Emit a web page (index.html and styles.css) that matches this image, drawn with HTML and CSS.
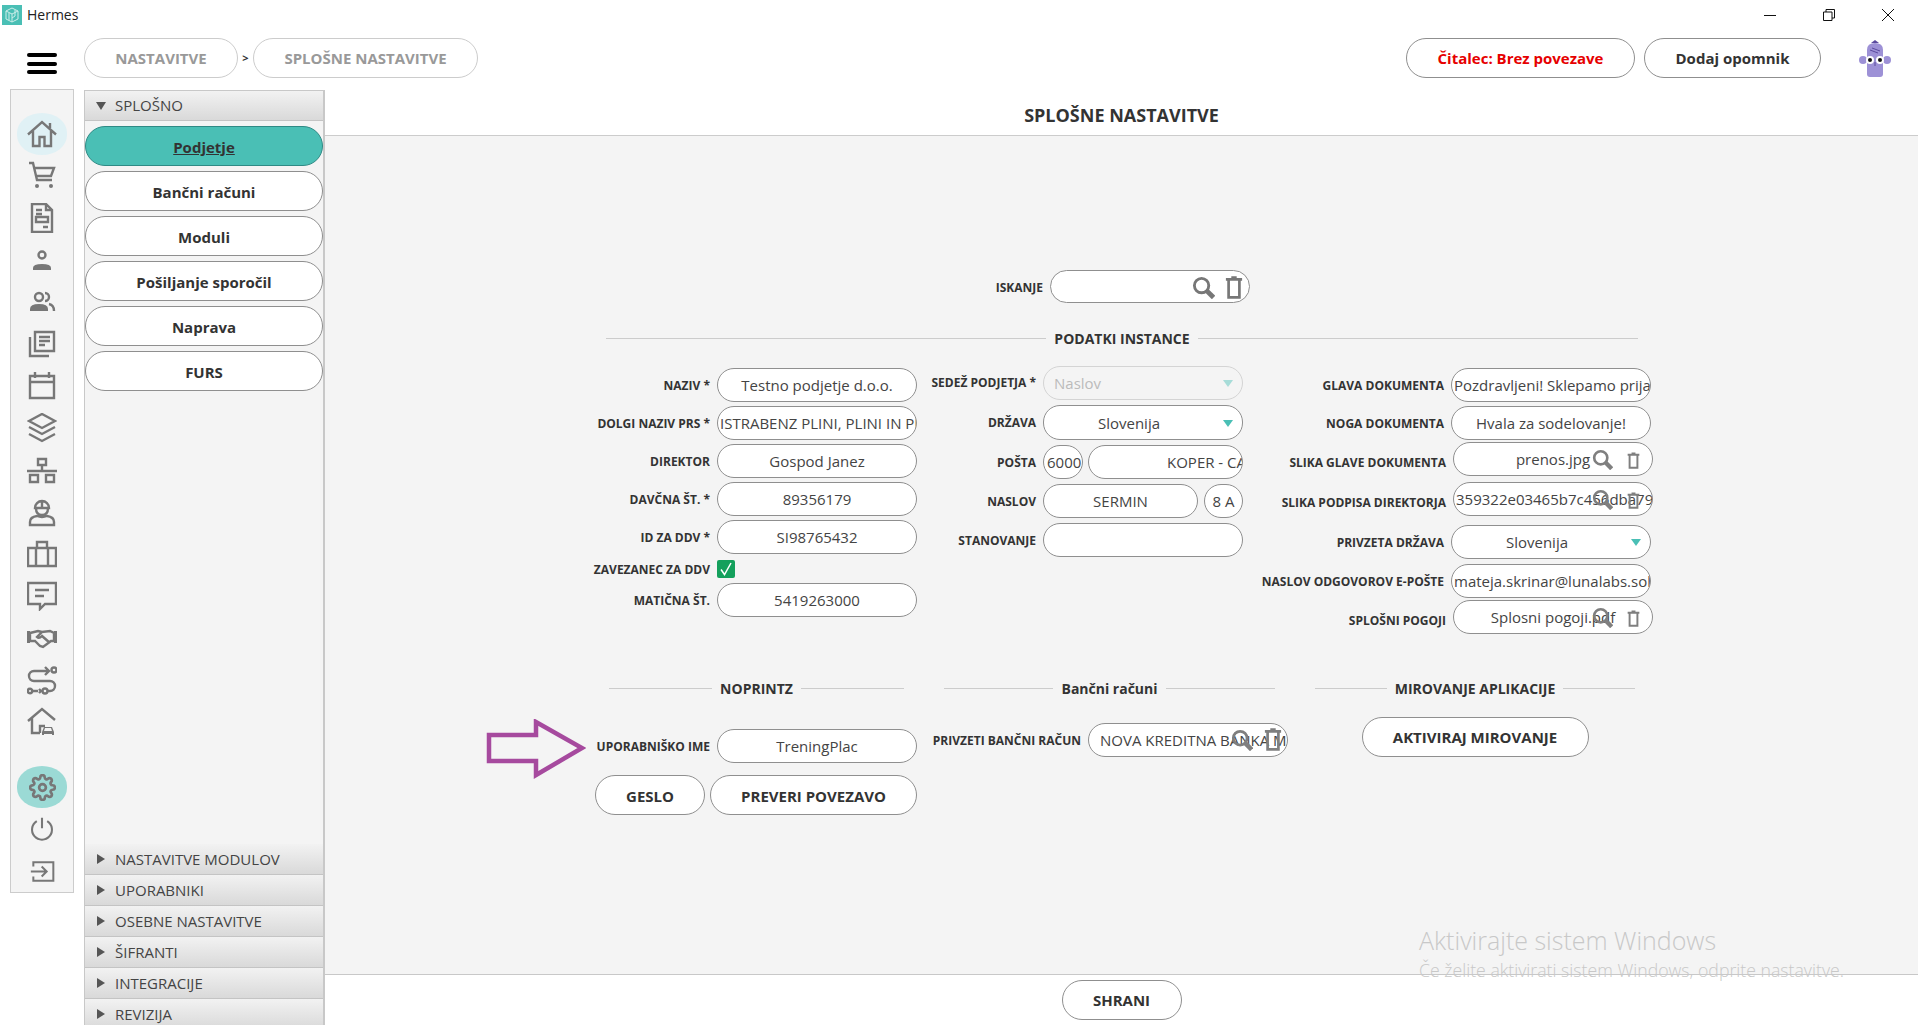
FILE: index.html
```html
<!DOCTYPE html>
<html lang="sl">
<head>
<meta charset="utf-8">
<title>Hermes</title>
<link rel="stylesheet" href="styles.css">
</head>
<body>
<div class="app">
  <header class="titlebar">
    <svg class="app-logo" viewBox="0 0 20 20" width="20" height="20"><rect width="20" height="20" fill="#4abfb5"/><path d="M10 3l6 3v8l-6 3-6-3V6zM4 6l6 3 6-3M10 9v8M7 8v7M13 5v6l-3 2" fill="none" stroke="#cdeeea" stroke-width="1"/></svg>
    <span class="app-name">Hermes</span>
    <div class="win-controls">
      <svg viewBox="0 0 12 12" width="12" height="12"><path d="M0 6.500h12" stroke="#111" fill="none"/></svg>
      <svg viewBox="0 0 12 12" width="12" height="12"><path d="M.5 3h8.500v8.500H.5zM3 3V.5h8.500V9H9" stroke="#111" fill="none"/></svg>
      <svg viewBox="0 0 12 12" width="12" height="12"><path d="M0 0l12 12M12 0L0 12" stroke="#111" fill="none"/></svg>
    </div>
  </header>

  <div class="toolbar">
    <div class="hamburger"><i></i><i></i><i></i></div>
    <div class="crumb crumb-a">NASTAVITVE</div>
    <span class="crumb-sep">&gt;</span>
    <div class="crumb crumb-b">SPLOŠNE NASTAVITVE</div>
    <div class="toolbar-right">
      <div class="btn reader">Čitalec: Brez povezave</div>
      <div class="btn reminder">Dodaj opomnik</div>
      <svg class="mascot" viewBox="0 0 32 38" width="32" height="38">
        <path d="M12 3l4-3 4 3z" fill="#5b4a9e"/>
        <path d="M8 10q0-7 8-7t8 7v24q0 3-3 3H11q-3 0-3-3z" fill="#9d91d6"/>
        <circle cx="4" cy="20" r="4" fill="#9d91d6"/><circle cx="28" cy="20" r="4" fill="#9d91d6"/>
        <circle cx="11" cy="20" r="4" fill="#fff"/><circle cx="21" cy="20" r="4" fill="#fff"/>
        <circle cx="11" cy="20" r="2" fill="#111"/><circle cx="21" cy="20" r="2" fill="#111"/>
        <path d="M16 22v4M11 10l8 3M13 8l8 3" stroke="#5b4a9e" fill="none"/>
      </svg>
    </div>
  </div>

  <div class="workspace">
    <nav class="rail">
      <div class="rail-group">
        <div class="rail-item home-item"><svg class="ic" viewBox="0 0 30 30" width="30" height="30"><path d="M1 15.500L15 3l14 12.500M6 12v15h6.500v-9h5v9H24V12M23 9V4"/></svg></div>
        <div class="rail-item"><svg class="ic" viewBox="0 0 30 30" width="30" height="30"><path d="M2 2h4l4 17h15M7 7h20l-3 8H9"/><circle cx="10" cy="25" r="2" class="solid"/><circle cx="24" cy="25" r="2" class="solid"/></svg></div>
        <div class="rail-item"><svg class="ic" viewBox="0 0 30 30" width="30" height="30"><path d="M5 1h14l6 6v22H5zM19 1v6h6M9 7h6M9 11h6M9 14h12v5H9zM16 24h5"/></svg></div>
        <div class="rail-item"><svg class="ic" viewBox="0 0 30 30" width="30" height="30"><circle cx="15" cy="10" r="3.500"/><path class="solid" d="M6 25v-2q0-4 9-4t9 4v2z"/></svg></div>
        <div class="rail-item"><svg class="ic" viewBox="0 0 30 30" width="30" height="30"><circle cx="12" cy="10" r="4"/><path d="M18 6a4 4 0 0 1 0 8"/><path class="solid" d="M3 24v-2q0-5 9-5t9 5v2z"/><path d="M22 17q5 1 5 7"/></svg></div>
        <div class="rail-item"><svg class="ic" viewBox="0 0 30 30" width="30" height="30"><path d="M8 3h19v19H8zM3 8v19h19M12 8h11M12 12h11M12 16h6"/></svg></div>
        <div class="rail-item"><svg class="ic" viewBox="0 0 30 30" width="30" height="30"><path d="M3 5h24v22H3zM3 11h24M8 1v6M22 1v6"/></svg></div>
        <div class="rail-item"><svg class="ic" viewBox="0 0 30 30" width="30" height="30"><path d="M15 1l13 7-13 7L2 8zM2 14l13 7 13-7M2 21l13 7 13-7"/></svg></div>
        <div class="rail-item"><svg class="ic" viewBox="0 0 30 30" width="30" height="30"><path d="M11 4h8v6h-8zM15 10v5M0 16h30M3 20h8v7H3zM19 20h8v7h-8z"/></svg></div>
        <div class="rail-item"><svg class="ic" viewBox="0 0 30 30" width="30" height="30"><path d="M8 11a7 7 0 0 1 14 0zM15 4v7M9 11q0 7 6 7t6-7M3 28v-3q0-5 7-6 5 2 10 0 7 1 7 6v3z"/></svg></div>
        <div class="rail-item"><svg class="ic" viewBox="0 0 30 30" width="30" height="30"><path d="M1 9h28v18H1zM10 9V3h10v6M9 9v18M21 9v18"/></svg></div>
        <div class="rail-item"><svg class="ic" viewBox="0 0 30 30" width="30" height="30"><path d="M1 2h28v21H18l-5 5v-5H1zM8 9h14M8 15h9"/></svg></div>
        <div class="rail-item"><svg class="ic" viewBox="0 0 30 30" width="30" height="30"><path class="solid" d="M0 8h3v12H0zM27 8h3v12h-3z"/><path d="M3 10l8-2 4 1 8-1 4 2v8h-3l-8 6-3-1-5-5H3zM15 9l-5 5q2 2 5-1l8 7"/></svg></div>
        <div class="rail-item"><svg class="ic" viewBox="0 0 30 30" width="30" height="30"><path d="M21 6H7a5 5 0 0 0 0 10h16a5 5 0 0 1 0 10h-2M18 2l4 4-4 4M5 26h6M12 24l2 2-2 2"/><circle cx="27" cy="5" r="2.500"/><circle cx="3" cy="26" r="2.200"/><circle cx="18" cy="26" r="2.500"/></svg></div>
        <div class="rail-item"><svg class="ic" viewBox="0 0 30 30" width="30" height="30"><path d="M1 14L15 2l13 11M5 11v15h8M13 26v-7h5"/><path class="solid" d="M15 28v-3l2-5h8l2 5v3h-2v-1H17v1zM18 21l-1 3h8l-1-3z"/></svg></div>
      </div>
      <div class="rail-group rail-bottom">
        <div class="rail-item gear-item"><svg class="ic" viewBox="0 0 24 24" width="27" height="27"><circle cx="12" cy="12" r="3"/><path d="M19.4 15a1.65 1.65 0 0 0 .33 1.820l.06.06a2 2 0 0 1 0 2.830 2 2 0 0 1-2.830 0l-.06-.06a1.65 1.65 0 0 0-1.820-.33 1.65 1.65 0 0 0-1 1.510V21a2 2 0 0 1-2 2 2 2 0 0 1-2-2v-.09A1.65 1.65 0 0 0 9 19.400a1.65 1.65 0 0 0-1.820.33l-.06.06a2 2 0 0 1-2.830 0 2 2 0 0 1 0-2.830l.06-.06a1.65 1.65 0 0 0 .33-1.820 1.65 1.65 0 0 0-1.510-1H3a2 2 0 0 1-2-2 2 2 0 0 1 2-2h.09A1.65 1.65 0 0 0 4.600 9a1.65 1.65 0 0 0-.33-1.820l-.06-.06a2 2 0 0 1 0-2.830 2 2 0 0 1 2.830 0l.06.06a1.65 1.65 0 0 0 1.820.33H9a1.65 1.65 0 0 0 1-1.510V3a2 2 0 0 1 2-2 2 2 0 0 1 2 2v.09a1.65 1.65 0 0 0 1 1.510 1.65 1.65 0 0 0 1.820-.33l.06-.06a2 2 0 0 1 2.830 0 2 2 0 0 1 0 2.830l-.06.06a1.65 1.65 0 0 0-.33 1.820V9a1.65 1.65 0 0 0 1.510 1H21a2 2 0 0 1 2 2 2 2 0 0 1-2 2h-.09a1.65 1.65 0 0 0-1.510 1z"/></svg></div>
        <div class="rail-item"><svg class="ic" viewBox="0 0 30 30" width="26" height="26"><path d="M9 6a11.500 11.500 0 1 0 12 0M15 2v12"/></svg></div>
        <div class="rail-item"><svg class="ic" viewBox="0 0 30 30" width="25" height="25"><path d="M4 9V4h24v22H4v-5M1 15h18M14 9l6 6-6 6"/></svg></div>
      </div>
    </nav>

    <aside class="accordion">
      <div class="acc-head open"><i class="tri-down"></i>SPLOŠNO</div>
      <div class="acc-body">
        <div class="btn side-btn active">Podjetje</div>
        <div class="btn side-btn">Bančni računi</div>
        <div class="btn side-btn">Moduli</div>
        <div class="btn side-btn">Pošiljanje sporočil</div>
        <div class="btn side-btn">Naprava</div>
        <div class="btn side-btn">FURS</div>
      </div>
      <div class="acc-head"><i class="tri-right"></i>NASTAVITVE MODULOV</div>
      <div class="acc-head"><i class="tri-right"></i>UPORABNIKI</div>
      <div class="acc-head"><i class="tri-right"></i>OSEBNE NASTAVITVE</div>
      <div class="acc-head"><i class="tri-right"></i>ŠIFRANTI</div>
      <div class="acc-head"><i class="tri-right"></i>INTEGRACIJE</div>
      <div class="acc-head"><i class="tri-right"></i>REVIZIJA</div>
    </aside>

    <main class="main">
      <h1 class="page-title">SPLOŠNE NASTAVITVE</h1>
      <div class="content">
        <div class="row search-row">
          <span class="lbl">ISKANJE</span>
          <div class="field w200 has-icons search-field">
            <svg class="i-search big" viewBox="0 0 24 24"><circle cx="10" cy="10" r="7.500"/><path d="M15.500 15.500L22.500 22.500" class="thick"/></svg>
            <svg class="i-trash big" viewBox="0 0 20 24"><path d="M1 3h18M4 3v20h12V3M7 1h6"/></svg>
          </div>
        </div>

        <div class="divider wide"><span>PODATKI INSTANCE</span></div>

        <div class="columns">
          <div class="col col-a">
            <div class="row"><span class="lbl">NAZIV *</span><div class="field w200">Testno podjetje d.o.o.</div></div>
            <div class="row"><span class="lbl">DOLGI NAZIV PRS *</span><div class="field w200 clip">ISTRABENZ PLINI, PLINI IN PLINSKE</div></div>
            <div class="row"><span class="lbl">DIREKTOR</span><div class="field w200">Gospod Janez</div></div>
            <div class="row"><span class="lbl">DAVČNA ŠT. *</span><div class="field w200">89356179</div></div>
            <div class="row"><span class="lbl">ID ZA DDV *</span><div class="field w200">SI98765432</div></div>
            <div class="row check-row"><span class="lbl">ZAVEZANEC ZA DDV</span><div class="check-slot"><svg class="check" viewBox="0 0 18 18" width="18" height="18"><rect width="18" height="18" rx="2" fill="#14a05c"/><path d="M4 9.500l3.500 5L14 3" fill="none" stroke="#fff" stroke-width="1.500"/></svg></div></div>
            <div class="row"><span class="lbl">MATIČNA ŠT.</span><div class="field w200">5419263000</div></div>
          </div>

          <div class="col col-b">
            <div class="row sedez"><span class="lbl">SEDEŽ PODJETJA *</span><div class="field w200 select disabled"><span class="sel-left">Naslov</span><i class="arrow"></i></div></div>
            <div class="row tall"><span class="lbl">DRŽAVA</span><div class="field w200 select"><span class="sel-mid">Slovenija</span><i class="arrow"></i></div></div>
            <div class="row"><span class="lbl">POŠTA</span><div class="pair"><div class="field w40 clip small-pad">6000</div><div class="field w155 clip koper">KOPER - CAPODISTRIA</div></div></div>
            <div class="row"><span class="lbl">NASLOV</span><div class="pair"><div class="field w155">SERMIN</div><div class="field w39">8 A</div></div></div>
            <div class="row"><span class="lbl">STANOVANJE</span><div class="field w200"></div></div>
          </div>

          <div class="col col-c">
            <div class="row inset"><span class="lbl">GLAVA DOKUMENTA</span><div class="field w200 clip">Pozdravljeni! Sklepamo prijateljstvo</div></div>
            <div class="row inset"><span class="lbl">NOGA DOKUMENTA</span><div class="field w200">Hvala za sodelovanje!</div></div>
            <div class="row file-row first-file"><span class="lbl low">SLIKA GLAVE DOKUMENTA</span><div class="field w200 has-icons file"><span class="file-text">prenos.jpg</span>
              <svg class="i-search" viewBox="0 0 24 24"><circle cx="10" cy="10" r="7.500"/><path d="M15.500 15.500L22.500 22.500" class="thick"/></svg><svg class="i-trash" viewBox="0 0 20 24"><path d="M1 3h18M4 3v20h12V3M7 1h6"/></svg></div></div>
            <div class="row file-row"><span class="lbl low">SLIKA PODPISA DIREKTORJA</span><div class="field w200 has-icons file clip-file"><span class="file-text">359322e03465b7c456dba79c2e</span>
              <svg class="i-search" viewBox="0 0 24 24"><circle cx="10" cy="10" r="7.500"/><path d="M15.500 15.500L22.500 22.500" class="thick"/></svg><svg class="i-trash" viewBox="0 0 20 24"><path d="M1 3h18M4 3v20h12V3M7 1h6"/></svg></div></div>
            <div class="row inset gap-privzeta"><span class="lbl">PRIVZETA DRŽAVA</span><div class="field w200 select"><span class="sel-mid">Slovenija</span><i class="arrow"></i></div></div>
            <div class="row inset gap-reply"><span class="lbl">NASLOV ODGOVOROV E-POŠTE</span><div class="field w200 clip">mateja.skrinar@lunalabs.solutions</div></div>
            <div class="row file-row gap-terms"><span class="lbl low">SPLOŠNI POGOJI</span><div class="field w200 has-icons file"><span class="file-text">Splosni pogoji.pdf</span>
              <svg class="i-search" viewBox="0 0 24 24"><circle cx="10" cy="10" r="7.500"/><path d="M15.500 15.500L22.500 22.500" class="thick"/></svg><svg class="i-trash" viewBox="0 0 20 24"><path d="M1 3h18M4 3v20h12V3M7 1h6"/></svg></div></div>
          </div>
        </div>

        <div class="sections">
          <section class="sec sec-a">
            <svg class="callout" viewBox="0 0 100 60" width="100" height="60"><path d="M3 16H50V3L96 29L50 56V42H3z" fill="none" stroke="#a64a9e" stroke-width="4.500"/></svg>
            <div class="divider"><span>NOPRINTZ</span></div>
            <div class="row user-row"><span class="lbl">UPORABNIŠKO IME</span><div class="field w200">TreningPlac</div></div>
            <div class="sec-a-btns"><div class="btn gesl">GESLO</div><div class="btn check-conn">PREVERI POVEZAVO</div></div>
          </section>
          <section class="sec sec-b">
            <div class="divider"><span>Bančni računi</span></div>
            <div class="row bank-row"><span class="lbl">PRIVZETI BANČNI RAČUN</span><div class="field w200 has-icons bank"><span class="bank-text">NOVA KREDITNA BANKA MARIBOR</span>
              <svg class="i-search" viewBox="0 0 24 24"><circle cx="10" cy="10" r="7.500"/><path d="M15.500 15.500L22.500 22.500" class="thick"/></svg><svg class="i-trash" viewBox="0 0 20 24"><path d="M1 3h18M4 3v20h12V3M7 1h6"/></svg></div></div>
          </section>
          <section class="sec sec-c">
            <div class="divider"><span>MIROVANJE APLIKACIJE</span></div>
            <div class="btn sleep">AKTIVIRAJ MIROVANJE</div>
          </section>
        </div>
      </div>
      <footer class="footer"><div class="btn save">SHRANI</div></footer>
      <div class="watermark"><div class="wm-1">Aktivirajte sistem Windows</div><div class="wm-2">Če želite aktivirati sistem Windows, odprite nastavitve.</div></div>
    </main>
  </div>
</div>
</body>
</html>
```

FILE: styles.css
```css
* { box-sizing: border-box; }
html, body { margin: 0; height: 100%; overflow: hidden; background: #fff; }
body { font-family: "Open Sans", "Noto Sans", sans-serif; color: #333; }
.app { width: 1918px; height: 1025px; display: flex; flex-direction: column; overflow: hidden; }

.titlebar { height: 30px; flex: none; display: flex; align-items: center; padding: 0 24px 4px 2px; }
.app-logo { margin-top: 4px; }
.app-name { font-size: 14px; color: #222; margin-left: 5px; margin-top: 2px; }
.win-controls { margin-left: auto; display: flex; gap: 47px; margin-top: 3px; }

.toolbar { height: 59px; flex: none; display: flex; align-items: flex-start; padding-top: 8px; }
.hamburger { width: 30px; height: 21px; margin: 15px 27px 0 27px; display: flex; flex-direction: column; justify-content: space-between; }
.hamburger i { height: 4px; background: #000; border-radius: 2px; }
.crumb { height: 40px; border: 1px solid #ccc; border-radius: 20px; display: flex; align-items: center; justify-content: center; font-size: 15px; font-weight: 700; color: #999; }
.crumb-a { width: 154px; }
.crumb-b { width: 225px; }
.crumb-sep { width: 15px; text-align: center; font-size: 11px; font-weight: 700; line-height: 40px; }
.toolbar-right { margin-left: auto; display: flex; align-items: flex-start; padding-right: 27px; }
.btn { height: 40px; border: 1px solid #8f8f8f; border-radius: 20px; background: #fff; display: flex; align-items: center; justify-content: center; font-size: 15px; font-weight: 700; color: #333; }
.reader { width: 229px; color: #e60000; margin-right: 9px; }
.reminder { width: 177px; margin-right: 38px; }
.mascot { margin-top: 2px; }

.workspace { flex: 1; display: flex; min-height: 0; }
.rail { width: 64px; height: 804px; margin-left: 10px; background: #f4f4f4; border: 1px solid #ccc; padding-top: 23px; display: flex; flex-direction: column; flex: none; }
.rail-bottom { margin-top: 23px; }
.rail-item { height: 42px; width: 50px; margin-left: 6px; display: flex; align-items: center; justify-content: center; border-radius: 25px / 20px; }
.home-item { background: #e0f1f5; }
.gear-item { background: #9bdad5; }
.ic { fill: none; stroke: #777; stroke-width: 2.400; }
.ic .solid { fill: #777; stroke: none; }

.accordion { width: 241px; height: 940px; margin: 1px 0 0 10px; flex: none; background: #f4f4f4; border-left: 1px solid #c8c8c8; border-right: 2px solid #c8c8c8; border-top: 1px solid #c8c8c8; display: flex; flex-direction: column; }
.acc-head { height: 31px; flex: none; display: flex; align-items: center; font-size: 15px; color: #444; background: linear-gradient(#f2f2f2, #d9d9d9); border-bottom: 1px solid #c4c4c4; padding-left: 30px; position: relative; }
.acc-head.open { height: 30px; padding-bottom: 2px; }
.tri-down { position: absolute; left: 11px; top: 11px; border-style: solid; border-width: 8px 5px 0; border-color: #555 transparent transparent; }
.tri-right { position: absolute; left: 12px; top: 10px; border-style: solid; border-width: 5px 0 5px 8px; border-color: transparent transparent transparent #555; }
.acc-body { flex: 1; display: flex; flex-direction: column; gap: 5px; padding-top: 5px; }
.side-btn { height: 40px; padding-top: 2px; }
.side-btn.active { background: #4abfb5; border-color: #2f8a85; text-decoration: underline; }

.main { flex: 1; display: flex; flex-direction: column; position: relative; min-width: 0; }
.page-title { height: 47px; flex: none; margin: 0; font-size: 18px; font-weight: 700; text-align: center; line-height: 14px; padding-top: 19px; color: #333; border-bottom: 1px solid #ccc; }
.content { flex: 1; background: #f4f4f4; padding-top: 134px; min-height: 0; }
.footer { height: 51px; flex: none; border-top: 1px solid #c8c8c8; display: flex; justify-content: center; align-items: flex-start; padding-top: 5px; }
.save { width: 120px; }

.row { display: flex; align-items: center; justify-content: flex-end; gap: 7px; }
.lbl { font-size: 12px; font-weight: 700; white-space: nowrap; color: #333; }
.field { height: 34px; flex: none; border: 1px solid #8f8f8f; border-radius: 17px; background: #fff; font-size: 15px; color: #444; display: flex; align-items: center; justify-content: center; white-space: nowrap; overflow: hidden; position: relative; }
.w200 { width: 200px; }
.w155 { width: 155px; }
.w40 { width: 40px; }
.w39 { width: 39px; }
.clip { justify-content: flex-start; padding-left: 2px; }
.small-pad { padding-left: 3px; }
.koper { padding-left: 78px; }
.pair { display: flex; justify-content: space-between; width: 200px; }

.search-row { width: 314px; margin-left: 611px; }
.search-row .lbl { padding-top: 2px; }
.search-field { height: 33px; }
.i-search, .i-trash { position: absolute; fill: none; stroke: #7f7f7f; stroke-width: 3; }
.i-search .thick { stroke-width: 5; }
.i-search { width: 21px; height: 21px; right: 39px; top: 6px; }
.i-trash { width: 13px; height: 17px; right: 12px; top: 9px; }
.i-search.big { width: 23px; height: 23px; right: 34px; top: 5px; stroke: #777; }
.i-trash.big { width: 18px; height: 23px; right: 6px; top: 5px; stroke: #777; }

.divider { display: flex; align-items: center; gap: 8px; height: 20px; font-size: 14px; font-weight: 700; color: #333; white-space: nowrap; }
.divider::before, .divider::after { content: ""; flex: 1; height: 1px; background: #ccc; }
.divider.wide { width: 1032px; margin: 25px 0 0 281px; }

.columns { display: flex; margin: 18px 0 0 255px; }
.col { display: flex; flex-direction: column; }
.col-a { width: 337px; padding-top: 2px; gap: 4px; }
.col-b { width: 318px; margin-left: 8px; gap: 5px; }
.col-c { width: 410px; padding-top: 2px; gap: 4px; }
.tall .field { height: 35px; }
.sedez .lbl { padding-bottom: 2px; }
.check-row { height: 18px; margin-top: 2px; margin-bottom: 1px; }
.check-slot { width: 200px; height: 18px; }
.check { display: block; }
.select { justify-content: flex-start; padding-left: 10px; }
.sel-left { color: #bbb; }
.sel-mid { width: 150px; text-align: center; }
.arrow { position: absolute; right: 9px; top: 50%; margin-top: -3px; border-style: solid; border-width: 7px 5px 0; border-color: #4abfb5 transparent transparent; }
.disabled { background: transparent; border-color: #d4d4d4; }
.disabled .arrow { opacity: .45; }
.inset { margin-right: 2px; }
.first-file { margin-top: -2px; }
.file-row + .file-row { margin-top: 2px; }
.gap-privzeta { margin-top: 5px; }
.gap-reply { margin-top: 1px; }
.gap-terms { margin-top: -2px !important; }
.low { padding-top: 6px; }
.file { justify-content: center; }
.clip-file { justify-content: flex-start; padding-left: 2px; }

.sections { display: flex; margin-top: 44px; }
.sec { flex: none; position: relative; }
.sec-a { width: 322px; margin-left: 270px; }
.sec-a .divider { margin: 0 13px 0 14px; }
.callout { position: absolute; left: -109px; top: 41px; }
.user-row { margin-top: 31px; }
.sec-a-btns { display: flex; justify-content: space-between; margin-top: 12px; }
.gesl { width: 110px; padding-top: 1px; }
.check-conn { width: 207px; padding-top: 1px; }
.sec-b { width: 355px; margin-left: 16px; }
.sec-b .divider { margin: 0 13px 0 11px; }
.bank-row { margin-top: 25px; }
.bank { justify-content: flex-start; padding-left: 11px; }
.bank .i-search { right: 34px; top: 5px; width: 22px; height: 22px; }
.bank .i-trash { right: 5px; top: 3px; width: 18px; height: 25px; }
.sec-c { width: 320px; margin-left: 27px; }
.sleep { width: 227px; margin: 19px auto 0; }

.watermark { position: absolute; left: 1094px; top: 835px; color: #c8c8c8; font-weight: 300; pointer-events: none; white-space: nowrap; }
.wm-1 { font-size: 25px; line-height: 32px; }
.wm-2 { font-size: 17.700px; line-height: 22px; margin-top: 3px; }
```
